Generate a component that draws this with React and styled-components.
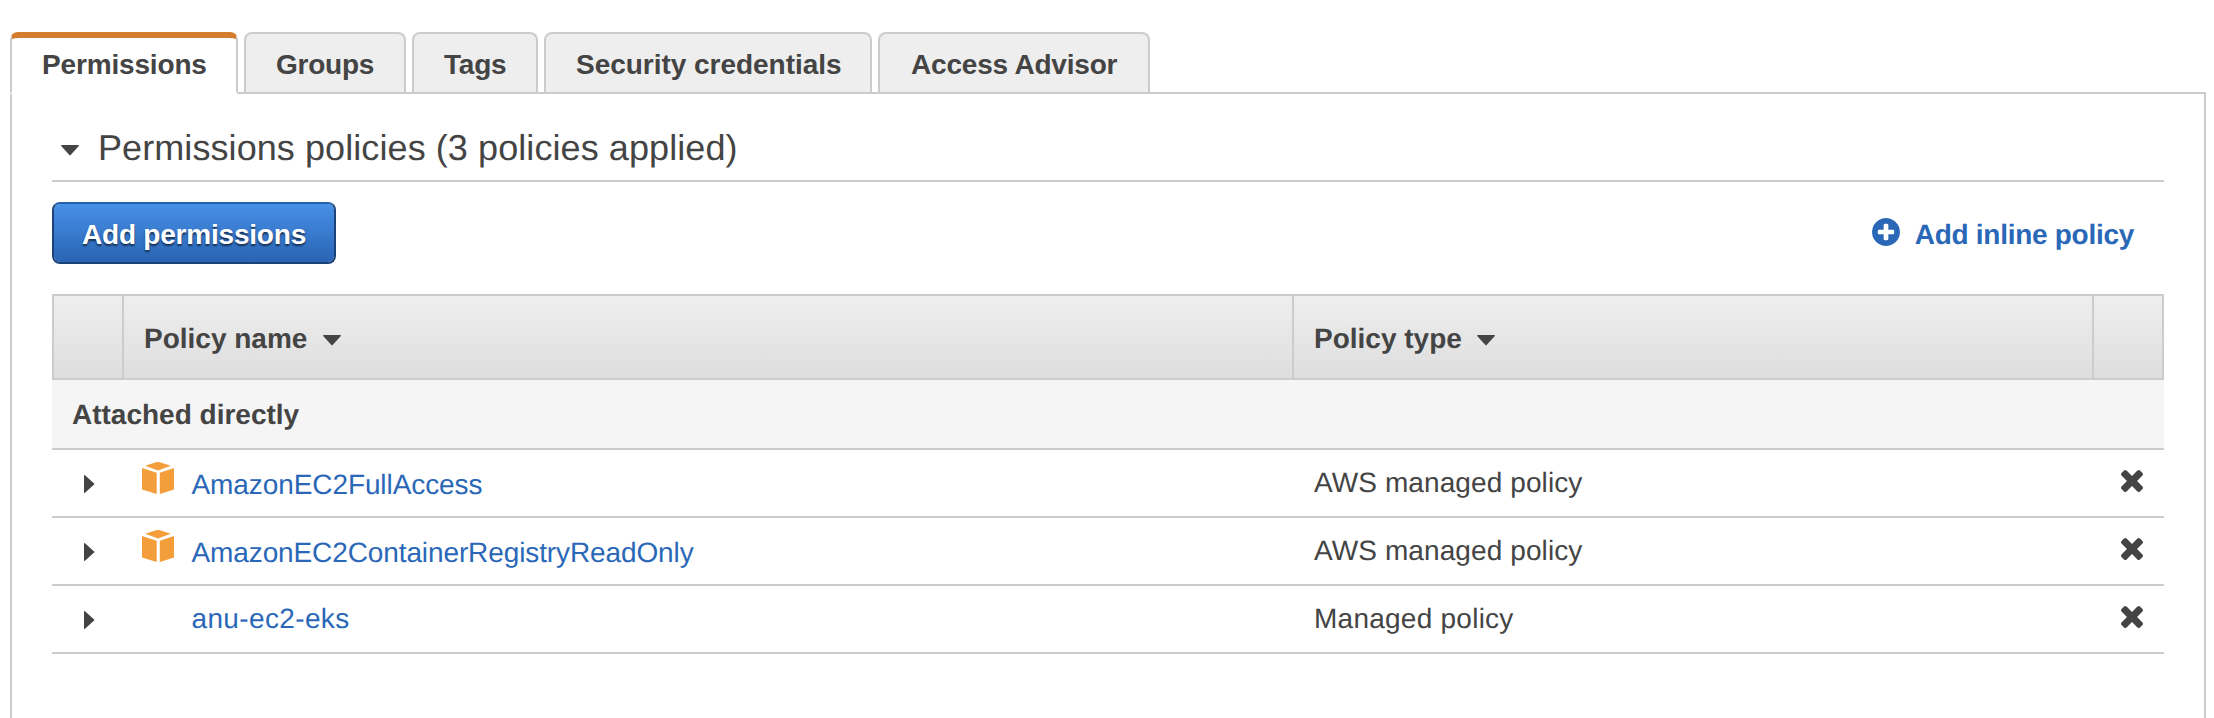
import React from 'react';
import styled, { createGlobalStyle, css } from 'styled-components';

const GlobalStyle = createGlobalStyle`
  *, *::before, *::after { box-sizing: border-box; }
  html, body { margin: 0; background: #fff; }
  body {
    font-family: "Liberation Sans", Arial, Helvetica, sans-serif;
    font-size: 28px;
    line-height: 32px;
    color: #444;
    text-rendering: geometricPrecision;
  }
`;

const Page = styled.main`
  height: 718px;
  padding: 32px 8px 0 10px;
  display: flex;
  flex-direction: column;
  overflow: hidden;
`;

const TabBar = styled.nav`
  display: flex;
  gap: 6px;
  height: 60px;
`;

const Tab = styled.button`
  width: ${(p) => p.$width}px;
  height: 60px;
  padding: 15px 0 0 ${(p) => p.$inset || 30}px;
  display: flex;
  align-items: flex-start;
  border: 2px solid #ccc;
  border-bottom: 0;
  border-radius: 8px 8px 0 0;
  background: #eee;
  font: inherit;
  font-weight: 700;
  letter-spacing: ${(p) => p.$track}px;
  color: #444;
  white-space: nowrap;
  cursor: pointer;
  ${(p) =>
    p.$active &&
    css`
      position: relative;
      height: 62px;
      padding-top: 11px;
      border-top: 6px solid #d47d2c;
      border-bottom: 2px solid #fff;
      background: #fff;
    `}
`;

const Panel = styled.section`
  flex: 1;
  padding: 0 40px;
  border: 2px solid #ccc;
  border-bottom: 0;
`;

const SectionHeading = styled.h2`
  height: 88px;
  margin: 0;
  padding: 34px 0 0 9px;
  display: flex;
  align-items: flex-start;
  gap: 19px;
  border-bottom: 2px solid #ccc;
  font-size: 36px;
  line-height: 40px;
  font-weight: 400;
  letter-spacing: 0.08px;

  svg { margin-top: 17px; }
`;

const Toolbar = styled.div`
  height: 112px;
  padding: 20px 30px 0 0;
  display: flex;
  align-items: flex-start;
  justify-content: space-between;
`;

const PrimaryButton = styled.button`
  width: 284px;
  height: 62px;
  padding: 15px 0 0 28px;
  display: flex;
  align-items: flex-start;
  border: 2px solid #1c4379;
  border-top-color: #2661ab;
  border-radius: 8px;
  background: linear-gradient(#4790e8, #2964b3) padding-box;
  color: #fff;
  font: inherit;
  font-weight: 700;
  letter-spacing: -0.21px;
  text-shadow: 0 2px 2px rgba(0, 0, 0, 0.6);
  white-space: nowrap;
  cursor: pointer;
`;

const InlineAction = styled.a`
  margin-top: 16px;
  display: flex;
  gap: 15px;
  color: #2a67b7;
  font-weight: 700;
  letter-spacing: -0.28px;
  cursor: pointer;

  span { padding-top: 1px; }
`;

const Table = styled.div`
  display: flex;
  flex-direction: column;
`;

const columns = '70px 1170px 800px 72px';

const HeaderRow = styled.div`
  height: 86px;
  display: grid;
  grid-template-columns: ${columns};
  border: solid #ccc;
  border-width: 2px 0;
  background: linear-gradient(#eee, #dedede);
`;

const HeaderCell = styled.div`
  padding: 27px 0 0 20px;
  display: flex;
  align-items: flex-start;
  gap: 15.5px;
  border-left: 2px solid #ccc;
  font-weight: 700;

  &:last-child { border-right: 2px solid #ccc; }
  svg { margin-top: 12px; }
`;

const GroupRow = styled.div`
  height: 70px;
  padding: 19px 0 0 20px;
  border-bottom: 2px solid #ccc;
  background: #f5f5f5;
  font-weight: 700;
`;

const Row = styled.div`
  height: 68px;
  display: grid;
  grid-template-columns: ${columns};
  border-bottom: 2px solid #ccc;
`;

const ToggleCell = styled.div`
  padding: 25px 0 0 32px;
  svg { display: block; }
`;

const NameCell = styled.div`
  padding-left: 20px;
  display: grid;
  grid-template-columns: 49.5px 1fr;
`;

const IconSlot = styled.span`
  padding-top: 12px;
  svg { display: block; }
`;

const PolicyLink = styled.a`
  padding-top: ${(p) => (p.$managed ? 19 : 17)}px;
  color: #2a67b7;
  letter-spacing: ${(p) => p.$track}px;
  cursor: pointer;
`;

const TypeCell = styled.div`
  padding: 17px 0 0 22px;
  letter-spacing: ${(p) => (p.$managed ? 0.1 : 0.25)}px;
`;

const RemoveCell = styled.div`
  padding: 20px 0 0 29px;
  svg { display: block; }
`;

const CaretDown = () => (
  <svg width="18" height="11" viewBox="0 0 18 11" fill="#444">
    <path d="M0.6 0H17.4Q18.4 0.3 17.6 1.3L9.6 10.1Q9 10.8 8.4 10.1L0.4 1.3Q-0.4 0.3 0.6 0Z" />
  </svg>
);

const CaretRight = () => (
  <svg width="11" height="18" viewBox="0 0 11 18" fill="#444">
    <path d="M0 0.6Q0.3 -0.4 1.3 0.4L10.1 8.4Q10.8 9 10.1 9.6L1.3 17.6Q0.3 18.4 0 17.4Z" />
  </svg>
);

const CubeIcon = () => (
  <svg width="32" height="32" viewBox="0 0 32 32" fill="#f49d3b">
    <path d="M3.2 3.8L14 0.3Q16 -0.2 18 0.3L28.8 3.8L16 8.4Z" />
    <path d="M0 6L14.7 10.8V32L0 27.4Z" />
    <path d="M32 6L17.8 10.8V32L32 27.4Z" />
  </svg>
);

const PlusCircle = () => (
  <svg width="28" height="28" viewBox="128 128 1536 1536" fill="#2a67b7">
    <path d="M1344 960v-128q0-26-19-45t-45-19h-256v-256q0-26-19-45t-45-19h-128q-26 0-45 19t-19 45v256h-256q-26 0-45 19t-19 45v128q0 26 19 45t45 19h256v256q0 26 19 45t45 19h128q26 0 45-19t19-45v-256h256q26 0 45-19t19-45zm320-64q0 209-103 385.500t-279.500 279.500-385.500 103-385.500-103-279.500-279.500-103-385.500 103-385.500 279.500-279.500 385.500-103 385.500 103 279.500 279.500 103 385.500z" />
  </svg>
);

const RemoveIcon = () => (
  <svg width="22" height="22" viewBox="302 366 1188 1188" fill="#444">
    <path d="M1490 1322q0 40-28 68l-136 136q-28 28-68 28t-68-28l-294-294-294 294q-28 28-68 28t-68-28l-136-136q-28-28-28-68t28-68l294-294-294-294q-28-28-28-68t28-68l136-136q28-28 68-28t68 28l294 294 294-294q28-28 68-28t68 28l136 136q28 28 28 68t-28 68l-294 294 294 294q28 28 28 68z" />
  </svg>
);

const tabs = [
  { label: 'Permissions', width: 228, track: -0.16, active: true },
  { label: 'Groups', width: 162, track: -0.24 },
  { label: 'Tags', width: 126, track: -0.2 },
  { label: 'Security credentials', width: 328, track: -0.03 },
  { label: 'Access Advisor', width: 272, track: -0.2, inset: 31 },
];

const policies = [
  { name: 'AmazonEC2FullAccess', type: 'AWS managed policy', managed: true, track: -0.09 },
  { name: 'AmazonEC2ContainerRegistryReadOnly', type: 'AWS managed policy', managed: true, track: -0.11 },
  { name: 'anu-ec2-eks', type: 'Managed policy', managed: false, track: 0.36 },
];

export default function App() {
  return (
    <Page>
      <GlobalStyle />
      <TabBar>
        {tabs.map((t) => (
          <Tab key={t.label} $width={t.width} $track={t.track} $inset={t.inset} $active={t.active}>
            {t.label}
          </Tab>
        ))}
      </TabBar>
      <Panel>
        <SectionHeading>
          <CaretDown />
          <span>Permissions policies (3 policies applied)</span>
        </SectionHeading>
        <Toolbar>
          <PrimaryButton>Add permissions</PrimaryButton>
          <InlineAction>
            <PlusCircle />
            <span>Add inline policy</span>
          </InlineAction>
        </Toolbar>
        <Table>
          <HeaderRow>
            <HeaderCell />
            <HeaderCell>
              <span>Policy name</span>
              <CaretDown />
            </HeaderCell>
            <HeaderCell>
              <span>Policy type</span>
              <CaretDown />
            </HeaderCell>
            <HeaderCell />
          </HeaderRow>
          <GroupRow>Attached directly</GroupRow>
          {policies.map((p) => (
            <Row key={p.name}>
              <ToggleCell><CaretRight /></ToggleCell>
              <NameCell>
                <IconSlot>{p.managed && <CubeIcon />}</IconSlot>
                <PolicyLink $managed={p.managed} $track={p.track}>{p.name}</PolicyLink>
              </NameCell>
              <TypeCell $managed={p.managed}>{p.type}</TypeCell>
              <RemoveCell><RemoveIcon /></RemoveCell>
            </Row>
          ))}
        </Table>
      </Panel>
    </Page>
  );
}
